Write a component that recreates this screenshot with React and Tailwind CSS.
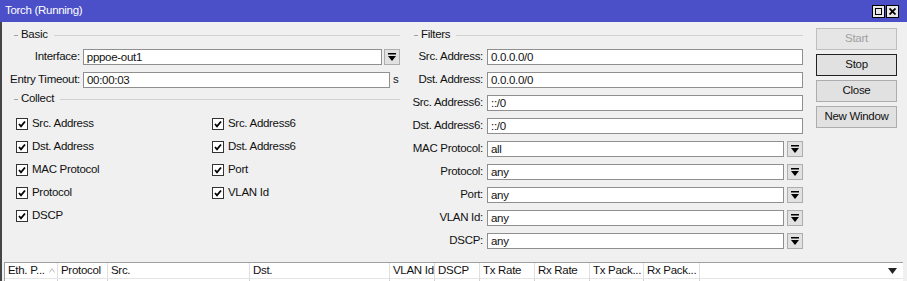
import React from 'react';

const DropBtn = () => (
    <div className="w-[16px] h-[16px] shrink-0 bg-[#e1e1e1] border border-[#adadad] flex items-center justify-center">
        <svg width="8" height="8" viewBox="0 0 8 8">
            <rect x="0" y="0" width="8" height="1.5" fill="#000" />
            <path d="M0 3 L8 3 L4 8 Z" fill="#000" />
        </svg>
    </div>
);

const Input = ({ value, className = '' }) => (
    <div className={`h-[16px] bg-white border border-[#8f8f8f] pl-[3px] leading-[14px] overflow-hidden whitespace-nowrap ${className}`}>
        {value}
    </div>
);

const GroupHeader = ({ title }) => (
    <div className="h-[14px] flex items-center">
        <div className="ml-[4px] w-[4px] h-px bg-[#a0a0a0]" />
        <span className="ml-[3px]">{title}</span>
        <div className="ml-[6px] flex-1 h-px bg-[#d0d0d0]" />
    </div>
);

const Check = ({ label }) => (
    <div className="h-[23px] flex items-center">
        <div className="w-[12px] h-[12px] bg-white border border-[#333] flex items-center justify-center">
            <svg width="8" height="8" viewBox="0 0 8 8">
                <path d="M1 4 L3 6.3 L7 1.5" stroke="#000" strokeWidth="1.8" fill="none" />
            </svg>
        </div>
        <span className="ml-[4px]">{label}</span>
    </div>
);

const FilterRow = ({ label, value, drop }) => (
    <div className="h-[16px] flex items-center">
        <div className="w-[73px] text-right whitespace-nowrap">{label}</div>
        <div className="ml-[4px] flex-1 flex items-center">
            <Input value={value} className="flex-1" />
            {drop && <div className="ml-[3px]"><DropBtn /></div>}
        </div>
    </div>
);

const columns = [
    { name: 'Eth. P...', w: 'w-[53px]', sort: true },
    { name: 'Protocol', w: 'w-[50px]' },
    { name: 'Src.', w: 'w-[142px]' },
    { name: 'Dst.', w: 'w-[140px]' },
    { name: 'VLAN Id', w: 'w-[45px]' },
    { name: 'DSCP', w: 'w-[45px]' },
    { name: 'Tx Rate', w: 'w-[55px]' },
    { name: 'Rx Rate', w: 'w-[55px]' },
    { name: 'Tx Pack...', w: 'w-[54px]' },
    { name: 'Rx Pack...', w: 'w-[56px]' },
];

const WinButton = ({ label, disabled, focused }) => (
    <div
        className={`h-[22px] flex items-center justify-center border bg-[#e1e1e1] ${
            disabled ? 'text-[#a0a0a0] border-[#bfbfbf] bg-[#e6e6e6]' : focused ? 'border-[#222]' : 'border-[#adadad]'
        }`}
    >
        {label}
    </div>
);

export default function App() {
    return (
        <div className="w-[907px] h-[281px] overflow-hidden bg-[#f0f0f0] text-[#111] text-[11.5px] tracking-[-0.3px] font-['Liberation_Sans',Arial,sans-serif]">
            {/* title bar */}
            <div className="h-[22px] bg-[#4b50c8] flex items-center pl-[5px] text-white">
                <span className="flex-1">Torch (Running)</span>
                <div className="flex gap-[1px] mr-[8px]">
                    <div className="w-[13px] h-[13px] bg-[#e8e8e8] border border-black flex items-center justify-center">
                        <div className="w-[7px] h-[7px] border border-black" />
                    </div>
                    <div className="w-[13px] h-[13px] bg-[#e8e8e8] border border-black flex items-center justify-center">
                        <svg width="7" height="7" viewBox="0 0 7 7">
                            <path d="M0.5 0.5 L6.5 6.5 M6.5 0.5 L0.5 6.5" stroke="#000" strokeWidth="1.8" />
                        </svg>
                    </div>
                </div>
            </div>

            <div className="h-[259px] border-l-2 border-[#454545] flex flex-col">
                <div className="h-[240px] flex pt-[6px]">
                    {/* Basic / Collect */}
                    <div className="ml-[8px] w-[390px]">
                        <GroupHeader title="Basic" />
                        <div className="mt-[7px] h-[16px] flex items-center">
                            <div className="w-[70px] text-right">Interface:</div>
                            <Input value="pppoe-out1" className="ml-[3px] w-[300px]" />
                            <div className="ml-[2px]"><DropBtn /></div>
                        </div>
                        <div className="mt-[7px] h-[16px] flex items-center">
                            <div className="w-[70px] text-right whitespace-nowrap">Entry Timeout:</div>
                            <Input value="00:00:03" className="ml-[3px] w-[307px]" />
                            <span className="ml-[3px]">s</span>
                        </div>
                        <div className="mt-[4px]">
                            <GroupHeader title="Collect" />
                        </div>
                        <div className="mt-[6px] pl-[6px] grid grid-cols-[196px_1fr]">
                            <div>
                                <Check label="Src. Address" />
                                <Check label="Dst. Address" />
                                <Check label="MAC Protocol" />
                                <Check label="Protocol" />
                                <Check label="DSCP" />
                            </div>
                            <div>
                                <Check label="Src. Address6" />
                                <Check label="Dst. Address6" />
                                <Check label="Port" />
                                <Check label="VLAN Id" />
                            </div>
                        </div>
                    </div>

                    {/* Filters */}
                    <div className="ml-[10px] w-[393px]">
                        <GroupHeader title="Filters" />
                        <div className="mt-[7px] flex flex-col gap-[7px]">
                            <FilterRow label="Src. Address:" value="0.0.0.0/0" />
                            <FilterRow label="Dst. Address:" value="0.0.0.0/0" />
                            <FilterRow label="Src. Address6:" value="::/0" />
                            <FilterRow label="Dst. Address6:" value="::/0" />
                            <FilterRow label="MAC Protocol:" value="all" drop />
                            <FilterRow label="Protocol:" value="any" drop />
                            <FilterRow label="Port:" value="any" drop />
                            <FilterRow label="VLAN Id:" value="any" drop />
                            <FilterRow label="DSCP:" value="any" drop />
                        </div>
                    </div>

                    {/* buttons */}
                    <div className="ml-[13px] w-[81px] flex flex-col gap-[4px]">
                        <WinButton label="Start" disabled />
                        <WinButton label="Stop" focused />
                        <WinButton label="Close" />
                        <WinButton label="New Window" />
                    </div>
                </div>

                {/* table */}
                <div className="ml-[2px] mr-[4px] flex-1 bg-white border-l border-t border-[#a0a0a0] flex flex-col">
                    <div className="h-[16px] flex border-b border-[#e5e5e5]">
                        {columns.map((c) => (
                            <div key={c.name} className={`${c.w} shrink-0 border-r border-[#e0e0e0] pl-[3px] leading-[15px] flex items-center whitespace-nowrap`}>
                                <span>{c.name}</span>
                                {c.sort && (
                                    <svg width="6" height="5" viewBox="0 0 6 5" className="ml-[4px]">
                                        <path d="M0.5 4.5 L3 0.5 L5.5 4.5" stroke="#bbb" fill="none" />
                                    </svg>
                                )}
                            </div>
                        ))}
                        <div className="flex-1 flex items-center justify-end pr-[6px]">
                            <svg width="9" height="6" viewBox="0 0 9 6">
                                <path d="M0 0 L9 0 L4.5 6 Z" fill="#222" />
                            </svg>
                        </div>
                    </div>
                    <div className="flex-1 flex">
                        {columns.map((c) => (
                            <div key={c.name} className={`${c.w} shrink-0 border-r border-dotted border-[#d0d0d0]`} />
                        ))}
                    </div>
                </div>
            </div>
        </div>
    );
}
